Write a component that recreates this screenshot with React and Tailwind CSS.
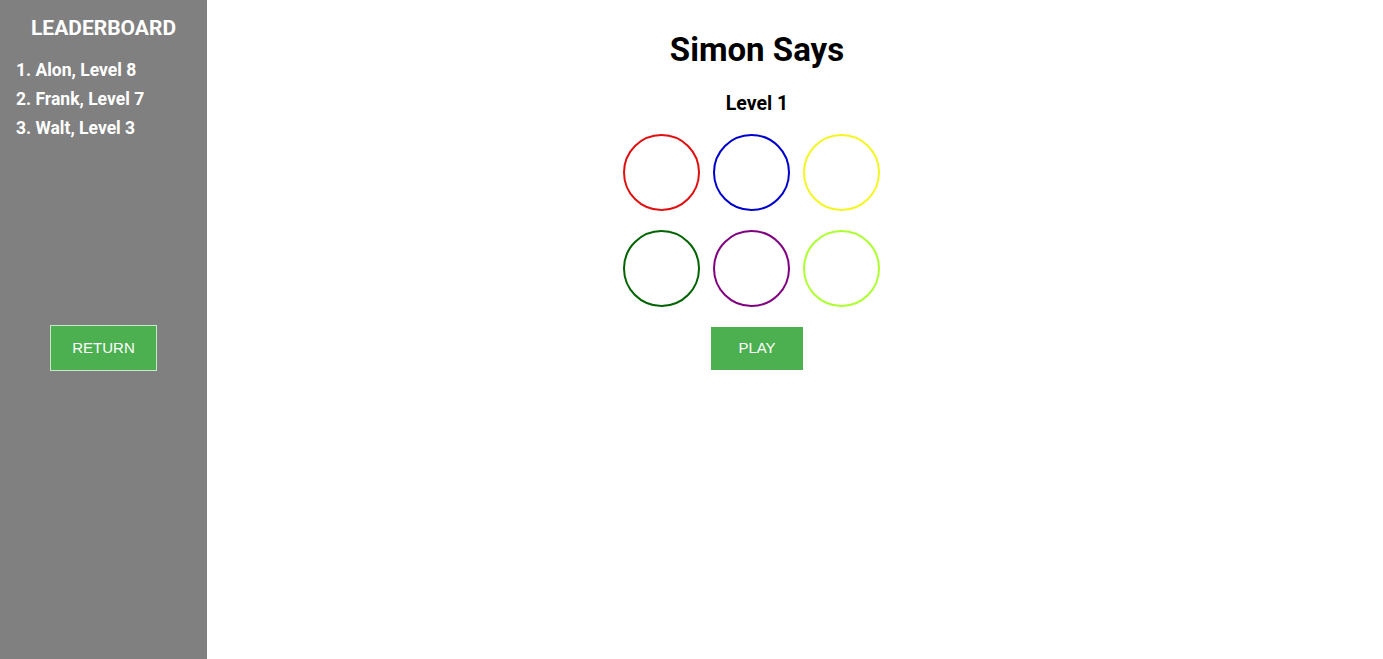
export default function App() {
  const circles = [
    "border-[#e01010]",
    "border-[#0000cc]",
    "border-[#f5f523]",
    "border-[#006400]",
    "border-[#800080]",
    "border-[#adff2f]",
  ];
  return (
    <div className="flex h-[659px] w-full bg-white" style={{ fontFamily: '"Franklin Gothic Medium", Roboto, "Liberation Sans", sans-serif' }}>
      <aside className="flex w-[207px] shrink-0 flex-col bg-[#808080] text-white">
        <h2 className="mt-[16px] text-center text-[21px] font-bold leading-[24px]">LEADERBOARD</h2>
        <ol className="mt-[20px] flex flex-col gap-[8px] pl-[16px] text-[17.5px] font-bold leading-[21px]">
          <li>1. Alon, Level 8</li>
          <li>2. Frank, Level 7</li>
          <li>3. Walt, Level 3</li>
        </ol>
        <div className="mt-[186px] flex justify-center">
          <button className="h-[46px] w-[107px] border border-[#c8e6c9] bg-[#4caf50] text-[15px] text-white" style={{ fontFamily: '"Liberation Sans", Arial, sans-serif' }}>
            RETURN
          </button>
        </div>
      </aside>
      <main className="flex flex-1 flex-col items-center pr-[76px]">
        <h1 className="mt-[31px] text-[33px] font-bold leading-[38px] text-black">Simon Says</h1>
        <h3 className="mt-[24px] text-[19.5px] font-bold leading-[22px] text-black">Level 1</h3>
        <div className="mr-[12px] mt-[19px] grid grid-cols-3 gap-x-[13px] gap-y-[19px]">
          {circles.map((c, i) => (
            <div key={i} className={`h-[77px] w-[77px] rounded-full border-[2.5px] ${c}`} />
          ))}
        </div>
        <button className="mt-[20px] h-[43px] w-[92px] bg-[#4caf50] text-[15px] text-white" style={{ fontFamily: '"Liberation Sans", Arial, sans-serif' }}>
          PLAY
        </button>
      </main>
    </div>
  );
}
